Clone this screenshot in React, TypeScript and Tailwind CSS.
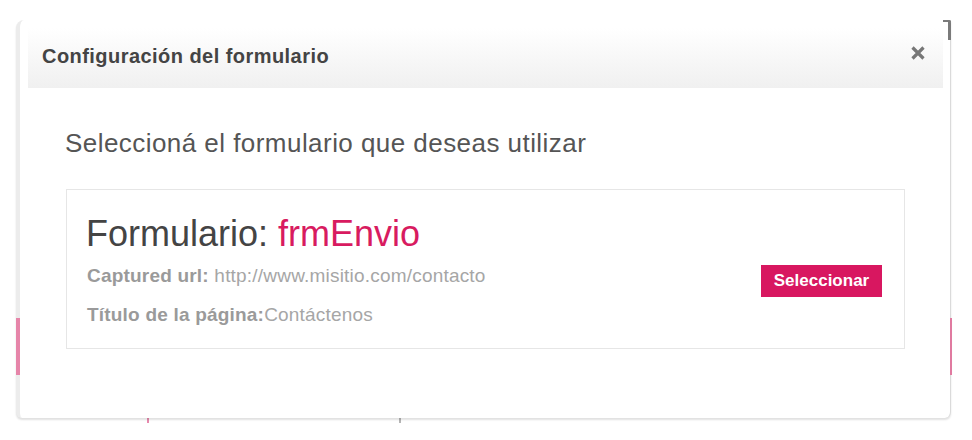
import React from "react";

export default function App() {
  return (
    <div
      className="relative w-[972px] h-[440px] bg-white pt-[20px] pl-[16px] overflow-hidden"
      style={{ fontFamily: '"Liberation Sans", Arial, Helvetica, sans-serif' }}
    >
      {/* background page peeking below the modal */}
      <div className="absolute left-[147px] top-[418px] w-[2px] h-[5px] bg-[#e88aae]" />
      <div className="absolute left-[399px] top-[418px] w-[2px] h-[5px] bg-[#b5b5b5]" />

      <div className="relative w-[935px] h-[398px] bg-white border-l-4 border-l-[#ececec] border-r border-r-[#dadada] rounded-tl-[8px] rounded-b-[6px] shadow-[0_2px_2px_rgba(0,0,0,0.12)] pt-[8px] pl-[8px] pr-[7px]">
        {/* peeking background bits */}
        <div className="absolute left-[-4px] top-[298px] w-[4px] h-[57px] bg-[#e685a9]" />
        <div className="absolute right-[-2px] top-[298px] w-[2px] h-[57px] bg-[#e07aa0]" />
        <div className="absolute right-[-1px] top-0 w-[8px] h-[2px] bg-[#7a7a7a] rounded-tr-[4px]" />
        <div className="absolute right-[-1px] top-0 w-[3px] h-[20px] bg-[#7a7a7a] rounded-tr-[4px]" />

        {/* header */}
        <div className="h-[60px] bg-linear-to-b from-white to-[#f0f0f0] flex items-start justify-between pl-[14px] pr-[17px] pt-[16px]">
          <h1 className="text-[20px] leading-[24px] font-bold text-[#444] tracking-[0.45px]">
            Configuración del formulario
          </h1>
          <button className="mt-[1px] w-[16px] h-[16px] flex items-center justify-center" aria-label="Cerrar">
            <svg width="16" height="16" viewBox="0 0 16 16">
              <path d="M2.5 2.5 L13.5 13.5 M13.5 2.5 L2.5 13.5" stroke="#777" strokeWidth="3.2" strokeLinecap="butt" />
            </svg>
          </button>
        </div>

        {/* body */}
        <div className="px-[38px] pt-[40px]">
          <p className="text-[26px] leading-[30px] text-[#555] tracking-[0.45px] -ml-[1px]">
            Seleccioná el formulario que deseas utilizar
          </p>

          <div className="mt-[31px] h-[160px] border border-[#e6e6e6] flex justify-between pl-[19px] pr-[22px] pt-[24px]">
            <div className="flex flex-col">
              <div className="text-[36px] leading-[40px] text-[#444]">
                Formulario: <span className="text-[#d81b60]">frmEnvio</span>
              </div>
              <div className="mt-[11px] text-[19px] leading-[22px] text-[#a6a6a6] tracking-[0.2px] ml-[1px]">
                <span className="font-bold text-[#9a9a9a]">Captured url:</span> http://www.misitio.com/contacto
              </div>
              <div className="mt-[17px] text-[19px] leading-[22px] text-[#a6a6a6] tracking-[0.2px] ml-[1px]">
                <span className="font-bold text-[#9a9a9a]">Título de la página:</span>Contáctenos
              </div>
            </div>
            <button className="mt-[51px] h-[32px] w-[121px] bg-[#d81760] text-white font-bold text-[17px] leading-[32px] text-center">
              Seleccionar
            </button>
          </div>
        </div>
      </div>
    </div>
  );
}
